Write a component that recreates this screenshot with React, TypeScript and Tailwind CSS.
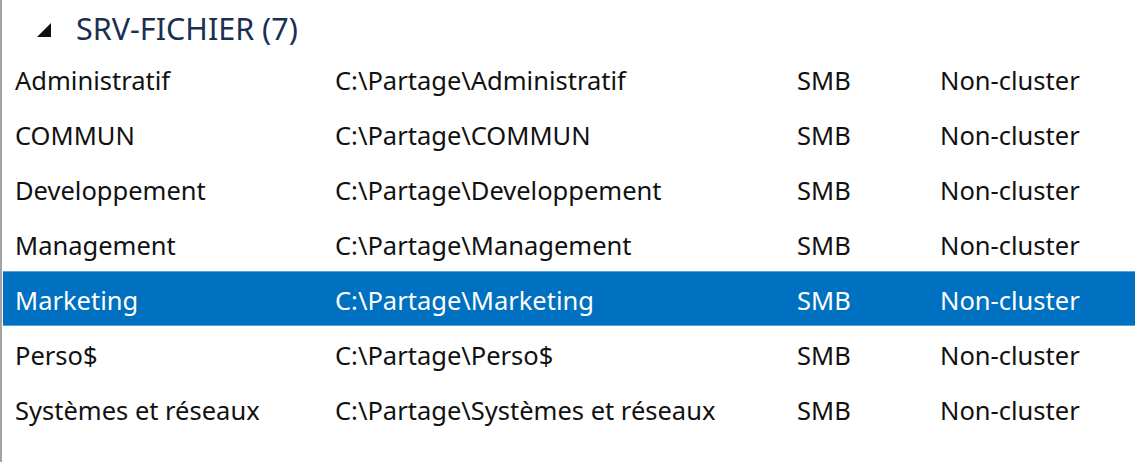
import React from "react";

const rows = [
  ["Administratif", "C:\\Partage\\Administratif"],
  ["COMMUN", "C:\\Partage\\COMMUN"],
  ["Developpement", "C:\\Partage\\Developpement"],
  ["Management", "C:\\Partage\\Management"],
  ["Marketing", "C:\\Partage\\Marketing"],
  ["Perso$", "C:\\Partage\\Perso$"],
  ["Systèmes et réseaux", "C:\\Partage\\Systèmes et réseaux"],
];

export default function App() {
  return (
    <div
      className="w-[1135px] h-[462px] bg-white border-l-2 border-[#a3a3a3] overflow-hidden"
      style={{ fontFamily: '"Noto Sans", "Open Sans", sans-serif' }}
    >
      <div className="pl-px">
        <div className="h-[51px] flex items-center pt-[6px]">
          <svg width="14" height="14" viewBox="0 0 14 14" className="ml-[34px] mt-[2px]">
            <polygon points="0,14 14,14 14,0" fill="#111" />
          </svg>
          <span className="ml-[25px] text-[30.5px] leading-none text-[#1b2f52]">SRV-FICHIER (7)</span>
        </div>
        {rows.map(([name, path], i) => {
          const sel = i === 4;
          return (
            <div
              key={name}
              className={
                "h-[55px] grid grid-cols-[332px_462px_143px_1fr] items-center pt-[3px] text-[25.5px] " +
                (sel
                  ? "bg-[#0070c0] text-white border-y border-[#5a9fd8]"
                  : "text-[#111111] border-y border-transparent")
              }
            >
              <span className="pl-[12px]">{name}</span>
              <span>{path}</span>
              <span>SMB</span>
              <span>Non-cluster</span>
            </div>
          );
        })}
      </div>
    </div>
  );
}
